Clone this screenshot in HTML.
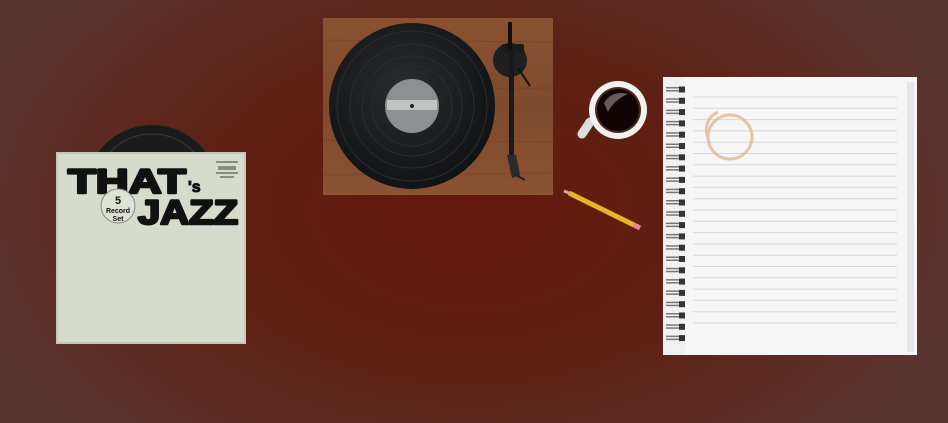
<!DOCTYPE html><html><head><style>
body{margin:0;width:948px;height:423px;overflow:hidden;background:radial-gradient(ellipse 520px 330px at 470px 210px,#651a0c 0%,#5e2014 50%,#5a3530 100%);position:relative;font-family:"Liberation Sans",sans-serif}
.a{position:absolute}
</style></head><body>
<svg class="a" style="left:0;top:0" width="948" height="423">
<defs>
<linearGradient id="wood" x1="0" y1="0" x2="0" y2="1"><stop offset="0" stop-color="#8a5132"/><stop offset=".5" stop-color="#7e4a2d"/><stop offset="1" stop-color="#8b5233"/></linearGradient>
<radialGradient id="vin" cx=".45" cy=".4" r=".6"><stop offset="0" stop-color="#2a2c2e"/><stop offset="1" stop-color="#111214"/></radialGradient>
</defs>
<circle cx="152" cy="192" r="67" fill="#1b1b1c"/><circle cx="152" cy="192" r="58" fill="none" stroke="#3a3a3a" stroke-width="1"/>
<rect x="56" y="152" width="190" height="192" fill="#d6dccc"/>
<rect x="57" y="153" width="188" height="190" fill="none" stroke="#c2c7b6" stroke-width="2"/>
<g font-family="Liberation Sans" font-weight="900" fill="#111" stroke="#111" stroke-width="2.5" stroke-linejoin="round">
<text x="68" y="193" font-size="34" textLength="118" lengthAdjust="spacingAndGlyphs">THAT</text>
<text x="188" y="192" font-size="16" stroke-width="1">'s</text>
<text x="138" y="224" font-size="34" textLength="100" lengthAdjust="spacingAndGlyphs">JAZZ</text>
</g>
<circle cx="118" cy="206" r="17" fill="#dde2d4" stroke="#888" stroke-width="1"/>
<text x="118" y="204" text-anchor="middle" font-size="11" font-weight="bold" fill="#111">5</text>
<text x="118" y="213" text-anchor="middle" font-size="7" font-weight="bold" fill="#111">Record</text>
<text x="118" y="221" text-anchor="middle" font-size="7" font-weight="bold" fill="#111">Set</text>
<g fill="#555" opacity=".6"><rect x="216" y="161" width="22" height="2"/><rect x="218" y="166" width="18" height="4"/><rect x="216" y="172" width="22" height="2"/><rect x="220" y="176" width="14" height="2"/></g>
<rect x="323" y="18" width="230" height="177" fill="url(#wood)"/>
<g stroke="#6e3f25" stroke-width="1" opacity=".5"><line x1="323" y1="40" x2="553" y2="42"/><line x1="323" y1="90" x2="553" y2="88"/><line x1="323" y1="140" x2="553" y2="142"/><line x1="323" y1="175" x2="553" y2="173"/></g>
<circle cx="412" cy="106" r="83" fill="url(#vin)"/>
<g fill="none" stroke="#2a2c2f" stroke-width="1"><circle cx="412" cy="106" r="75"/><circle cx="412" cy="106" r="62"/><circle cx="412" cy="106" r="50"/><circle cx="412" cy="106" r="40"/></g>
<circle cx="412" cy="106" r="27" fill="#8d8f90"/>
<rect x="387" y="100" width="50" height="10" fill="#cfcfcf" opacity=".8"/>
<circle cx="412" cy="106" r="2" fill="#222"/>
<circle cx="510" cy="60" r="17" fill="#1e1f21"/>
<rect x="502" y="44" width="22" height="8" rx="2" fill="#1a1a1a"/>
<rect x="508" y="22" width="4" height="30" fill="#111"/>
<rect x="509" y="50" width="5" height="105" fill="#1a1a1a"/>
<line x1="518" y1="68" x2="530" y2="86" stroke="#111" stroke-width="2"/>
<path d="M507 155 L516 155 L520 175 L512 178 Z" fill="#2a2a2a"/>
<line x1="516" y1="175" x2="525" y2="180" stroke="#222" stroke-width="2"/>
<path d="M590 122 L582 134" stroke="#ddd" stroke-width="9" stroke-linecap="round"/>
<circle cx="618" cy="110" r="29" fill="#f2f2f0"/>
<circle cx="618" cy="110" r="23" fill="#4a2a14"/>
<circle cx="618" cy="110" r="21" fill="#100503"/>
<path d="M604 103 Q612 90 628 94 Q614 100 608 112 Z" fill="#fff" opacity=".35"/>
<line x1="569" y1="193" x2="634" y2="225" stroke="#e8b42a" stroke-width="5"/>
<line x1="634" y1="225" x2="640" y2="228" stroke="#e6879a" stroke-width="5"/>
<line x1="564" y1="191" x2="569" y2="193" stroke="#caa" stroke-width="3"/>
<rect x="663" y="77" width="254" height="278" fill="#f6f6f6"/>
<rect x="907" y="82" width="7" height="270" fill="#e6e6e6"/>
<rect x="663" y="77" width="22" height="278" fill="#f1f1f1"/>
<g id="lines" stroke="#d8d8d8" stroke-width="1"></g>
<g fill="#777" id="sp"></g>
<g fill="none" stroke="#d9b88a" stroke-width="3" opacity=".75"><circle cx="730" cy="137" r="22"/><path d="M718 112 Q702 120 708 138"/></g>
</svg>
<script>
var s='';for(var i=0;i<23;i++){var y=89+i*11.3;s+='<rect x="666" y="'+(y-2)+'" width="16" height="1.5"/><rect x="666" y="'+(y+1)+'" width="16" height="1.5"/><rect x="679" y="'+(y-2.5)+'" width="6" height="6" fill="#333"/>';}
document.getElementById('sp').innerHTML=s;
var l='';for(var i=0;i<21;i++){var y=97+i*11.3;l+='<line x1="693" y1="'+y+'" x2="897" y2="'+y+'"/>';}
document.getElementById('lines').innerHTML=l;
</script>
</body></html>
